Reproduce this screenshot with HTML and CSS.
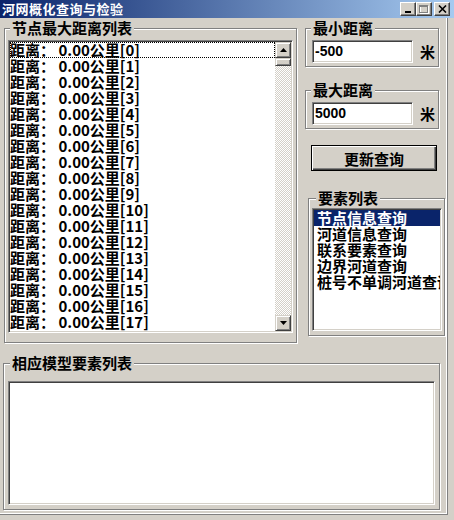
FILE: index.html
```html
<!DOCTYPE html>
<html lang="zh-CN">
<head>
    <meta charset="UTF-8">
    <title>河网概化查询与检验</title>
    <link rel="stylesheet" href="styles.css">
</head>
<body>
<div class="window">

    <!-- 标题栏 -->
    <div class="titlebar">
        <span class="title">河网概化查询与检验</span>
        <div class="caption-btns">
            <span class="cbtn">
                <svg width="8" height="8" viewBox="0 0 8 8"><rect x="1" y="6" width="6" height="2" fill="#000"/></svg>
            </span>
            <span class="cbtn">
                <svg width="10" height="9" viewBox="0 0 10 9">
                    <rect x="1.5" y="1.5" width="8" height="7" fill="none" stroke="#fff"/>
                    <rect x="0.5" y="0.5" width="8" height="7" fill="none" stroke="#808080"/>
                    <rect x="0" y="1" width="9" height="1" fill="#808080"/>
                </svg>
            </span>
            <span class="cbtn cbtn-close">
                <svg width="9" height="8" viewBox="0 0 9 8"><path d="M1 0.5 L8 7.5 M8 0.5 L1 7.5" stroke="#000" stroke-width="1.6"/></svg>
            </span>
        </div>
    </div>

    <div class="client">
        <div class="top">
            <!-- 节点最大距离列表 -->
            <fieldset class="group group-nodes">
                <legend>节点最大距离列表</legend>
                <div class="listbox list-dist">
                    <ul class="items">
                        <li class="focus">距离： 0.00公里[0]</li>
                        <li>距离： 0.00公里[1]</li>
                        <li>距离： 0.00公里[2]</li>
                        <li>距离： 0.00公里[3]</li>
                        <li>距离： 0.00公里[4]</li>
                        <li>距离： 0.00公里[5]</li>
                        <li>距离： 0.00公里[6]</li>
                        <li>距离： 0.00公里[7]</li>
                        <li>距离： 0.00公里[8]</li>
                        <li>距离： 0.00公里[9]</li>
                        <li>距离： 0.00公里[10]</li>
                        <li>距离： 0.00公里[11]</li>
                        <li>距离： 0.00公里[12]</li>
                        <li>距离： 0.00公里[13]</li>
                        <li>距离： 0.00公里[14]</li>
                        <li>距离： 0.00公里[15]</li>
                        <li>距离： 0.00公里[16]</li>
                        <li>距离： 0.00公里[17]</li>
                    </ul>
                    <div class="vscroll">
                        <span class="sb-btn">
                            <svg width="7" height="4" viewBox="0 0 7 4"><polygon points="3.5,0 7,4 0,4" fill="#000"/></svg>
                        </span>
                        <span class="sb-thumb"></span>
                        <span class="sb-track"></span>
                        <span class="sb-btn">
                            <svg width="7" height="4" viewBox="0 0 7 4"><polygon points="0,0 7,0 3.5,4" fill="#000"/></svg>
                        </span>
                    </div>
                </div>
            </fieldset>

            <div class="side">
                <fieldset class="group group-range">
                    <legend>最小距离</legend>
                    <div class="field-row">
                        <div class="edit">-500</div>
                        <span class="unit">米</span>
                    </div>
                </fieldset>

                <fieldset class="group group-range group-max">
                    <legend>最大距离</legend>
                    <div class="field-row">
                        <div class="edit">5000</div>
                        <span class="unit">米</span>
                    </div>
                </fieldset>

                <button class="btn-default">更新查询</button>

                <!-- 要素列表 -->
                <fieldset class="group group-elems">
                    <legend>要素列表</legend>
                    <div class="listbox list-elems">
                        <ul class="items">
                            <li class="sel">节点信息查询</li>
                            <li>河道信息查询</li>
                            <li>联系要素查询</li>
                            <li>边界河道查询</li>
                            <li>桩号不单调河道查询</li>
                        </ul>
                    </div>
                </fieldset>
            </div>
        </div>

        <!-- 相应模型要素列表 -->
        <fieldset class="group group-model">
            <legend>相应模型要素列表</legend>
            <div class="listbox list-model"></div>
        </fieldset>
    </div>
</div>
</body>
</html>
```

FILE: styles.css
```css
body {
    margin: 0;
    background-color: #d4d0c8;
    font-family: "Noto Sans CJK SC", sans-serif;
    color: #000;
}

.window {
    width: 454px;
    height: 520px;
    display: flex;
    flex-direction: column;
    overflow: hidden;
}

/* 标题栏 */
.titlebar {
    height: 18px;
    flex-shrink: 0;
    display: flex;
    align-items: center;
    justify-content: space-between;
    background: linear-gradient(to right, #0a246a, #a6caf0);
}

.title {
    padding-left: 2px;
    color: #fff;
    font-size: 13px;
    line-height: 18px;
    font-weight: bold;
    letter-spacing: 0.5px;
}

.caption-btns {
    display: flex;
    margin-right: 4px;
}

.cbtn {
    width: 16px;
    height: 14px;
    box-sizing: border-box;
    display: flex;
    align-items: center;
    justify-content: center;
    background-color: #d4d0c8;
    border: 1px solid;
    border-color: #fff #404040 #404040 #fff;
    box-shadow: inset -1px -1px #808080;
}

.cbtn-close {
    margin-left: 2px;
}

/* 客户区，右侧和底部有窗口边线 */
.client {
    width: 448px;
    height: 497px;
    box-sizing: border-box;
    padding-top: 2px;
    border-right: 1px solid #808080;
    border-bottom: 1px solid #808080;
    box-shadow: inset -1px -1px #fff;
}

.top {
    display: flex;
    align-items: flex-start;
}

/* 分组框 */
.group {
    margin: 0;
    padding: 4px 3px 9px;
    min-width: 0;
    box-sizing: border-box;
    border: 1px solid #808080;
    box-shadow: inset 1px 1px #fff, 1px 1px #fff;
}

.group legend {
    margin-left: 2px;
    padding: 0 2px;
    font-size: 15px;
    line-height: 16px;
    font-weight: bold;
    background-color: #d4d0c8;
}

.group-nodes {
    width: 293px;
    margin-left: 4px;
}

.side {
    width: 142px;
    margin-left: 8px;
    display: flex;
    flex-direction: column;
    align-items: flex-start;
}

.group-range {
    width: 134px;
    padding: 4px 3px 3px 6px;
}

.group-range legend {
    margin-left: -1px;
}

.group-max {
    margin-top: 15px;
}

.field-row {
    display: flex;
    align-items: center;
}

.edit {
    width: 101px;
    height: 23px;
    box-sizing: border-box;
    padding-left: 2px;
    background-color: #fff;
    border: 1px solid;
    border-color: #808080 #fff #fff #808080;
    box-shadow: inset 1px 1px #404040, inset -1px -1px #d4d0c8;
    font-family: "Liberation Sans", Arial, sans-serif;
    font-size: 14px;
    font-weight: bold;
    line-height: 20px;
}

.unit {
    margin-left: 7px;
    font-size: 15px;
    font-weight: bold;
}

/* 默认按钮 */
.btn-default {
    margin: 16px 0 0 6px;
    width: 126px;
    height: 26px;
    padding: 0;
    background-color: #d4d0c8;
    border: 1px solid #000;
    box-shadow: inset 1px 1px #fff, inset -1px -1px #404040, inset -2px -2px #808080;
    font-family: "Noto Sans CJK SC", sans-serif;
    font-size: 15px;
    font-weight: bold;
    color: #000;
}

.group-elems {
    width: 137px;
    margin: 19px 0 0 3px;
    padding: 2px 3px 4px;
}

.group-elems legend {
    margin-left: 4px;
}

.group-model {
    width: 437px;
    margin: 12px 0 0 3px;
    padding: 10px 4px 4px;
}

/* 列表框 */
.listbox {
    box-sizing: border-box;
    display: flex;
    padding: 1px;
    overflow: hidden;
    background-color: #fff;
    border: 1px solid;
    border-color: #808080 #fff #fff #808080;
    box-shadow: inset 1px 1px #404040, inset -1px -1px #d4d0c8;
}

.list-dist {
    height: 293px;
}

.list-elems {
    width: 130px;
    height: 123px;
}

.list-model {
    width: 427px;
    height: 124px;
}

.items {
    flex: 1;
    min-width: 0;
    margin: 0;
    padding: 0;
    list-style: none;
    overflow: hidden;
}

.items li {
    font-size: 15px;
    line-height: 16px;
    font-weight: bold;
    white-space: pre;
}

.items li.focus {
    outline: 1px dotted #000;
    outline-offset: -1px;
}

.list-elems .items li {
    padding-left: 3px;
}

.items li.sel {
    background-color: #0a246a;
    color: #fff;
}

/* 滚动条 */
.vscroll {
    width: 16px;
    flex-shrink: 0;
    display: flex;
    flex-direction: column;
    background: repeating-conic-gradient(#fff 0 25%, #d4d0c8 0 50%) 0 0 / 2px 2px;
}

.sb-btn,
.sb-thumb {
    box-sizing: border-box;
    background-color: #d4d0c8;
    border: 1px solid;
    border-color: #d4d0c8 #404040 #404040 #d4d0c8;
    box-shadow: inset 1px 1px #fff, inset -1px -1px #808080;
}

.sb-btn {
    height: 16px;
    display: flex;
    align-items: center;
    justify-content: center;
}

.sb-thumb {
    height: 8px;
}

.sb-track {
    flex: 1;
}
```
